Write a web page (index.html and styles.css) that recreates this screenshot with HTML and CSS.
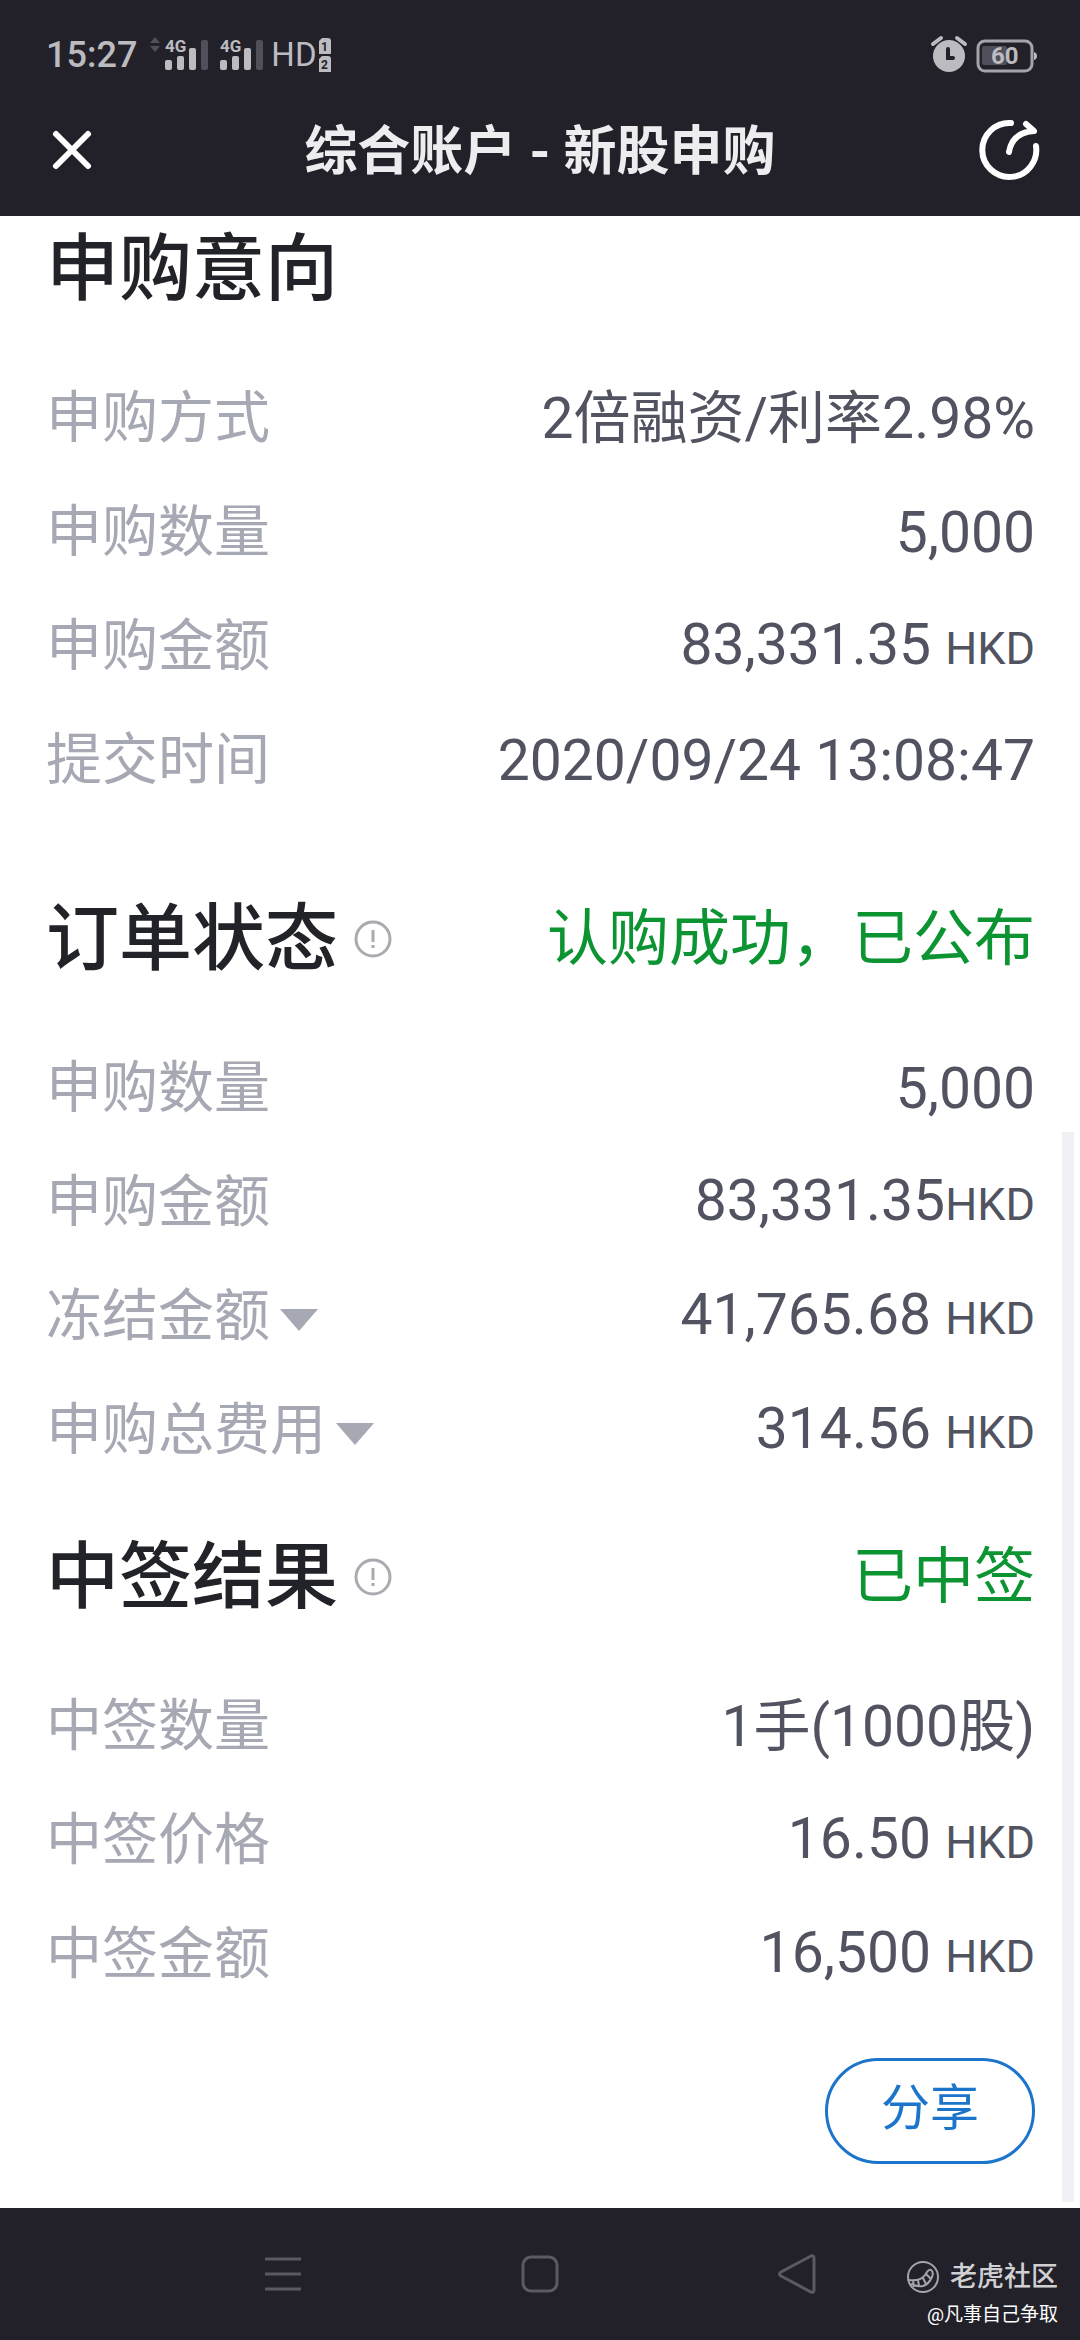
FILE: index.html
```
<!DOCTYPE html>
<html lang="zh-CN">
<head>
    <meta charset="UTF-8">
    <meta name="viewport" content="width=device-width, initial-scale=1.0">
    <title>综合账户 - 新股申购</title>
    <link rel="stylesheet" href="styles.css">
</head>
<body>
    <!-- 状态栏 -->
    <div class="status-bar">
        <span class="time">15:27</span>
        <svg class="signal-icons" width="120" height="40" viewBox="0 0 120 40">
            <path class="dim" d="M5 9l5-6 5 6zM5 12l5 6 5-6z"/>
            <text x="20" y="18" class="net">4G</text>
            <rect x="20" y="26" width="7" height="10" rx="2"/>
            <rect x="32" y="22" width="7" height="14" rx="2"/>
            <rect x="44" y="14" width="7" height="22" rx="2"/>
            <rect class="dim" x="56" y="6" width="7" height="30" rx="2"/>
            <text x="75" y="18" class="net">4G</text>
            <rect x="75" y="26" width="7" height="10" rx="2"/>
            <rect x="87" y="22" width="7" height="14" rx="2"/>
            <rect x="99" y="14" width="7" height="22" rx="2"/>
            <rect class="dim" x="111" y="6" width="7" height="30" rx="2"/>
        </svg>
        <span class="hd">HD</span>
        <svg class="sim-icons" width="14" height="40" viewBox="0 0 14 40">
            <path d="M4 4h6q3 0 3 3v13H1V7z"/>
            <path d="M4 22h6q3 0 3 3v13H1V25z"/>
            <text x="3" y="17" class="sim">1</text>
            <text x="3" y="35" class="sim">2</text>
        </svg>
        <svg class="power-icons" width="108" height="40" viewBox="0 0 108 40">
            <circle cx="19" cy="22" r="16"/>
            <path class="bells" d="M3 10l8-6M27 4l8 6"/>
            <path class="hands" d="M18 15v9h5"/>
            <rect class="charge" x="52" y="12" width="25" height="19" rx="2"/>
            <rect class="battery" x="48" y="7" width="54" height="30" rx="7"/>
            <path d="M104 18q3 1 3 4t-3 4z"/>
            <text x="61" y="30" class="level">60</text>
        </svg>
    </div>

    <header>
        <button type="button" class="icon-btn" aria-label="关闭">
            <svg width="44" height="44" viewBox="0 0 44 44">
                <path d="M6 6l32 32M38 6L6 38"/>
            </svg>
        </button>
        <h1>综合账户 - 新股申购</h1>
        <button type="button" class="icon-btn share-icon" aria-label="分享页面">
            <svg width="62" height="62" viewBox="0 0 62 62">
                <path d="M33 4A27 27 0 1 0 58 27"/>
                <path d="M31 33C33 20 42 13 56 12L48 5"/>
            </svg>
        </button>
    </header>

    <main>
        <section class="intent">
            <div class="section-head">
                <h2>申购意向</h2>
            </div>
            <dl>
                <div class="row"><dt>申购方式</dt><dd>2倍融资/利率2.98%</dd></div>
                <div class="row"><dt>申购数量</dt><dd>5,000</dd></div>
                <div class="row"><dt>申购金额</dt><dd>83,331.35 <small>HKD</small></dd></div>
                <div class="row"><dt>提交时间</dt><dd>2020/09/24 13:08:47</dd></div>
            </dl>
        </section>

        <section>
            <div class="section-head">
                <h2>订单状态</h2>
                <button type="button" class="info-btn" aria-label="订单状态说明">
                    <svg width="38" height="38" viewBox="0 0 38 38">
                        <circle cx="19" cy="19" r="17"/>
                        <path d="M19 10v12M19 25v3"/>
                    </svg>
                </button>
                <span class="state">认购成功，已公布</span>
            </div>
            <dl>
                <div class="row"><dt>申购数量</dt><dd>5,000</dd></div>
                <div class="row"><dt>申购金额</dt><dd>83,331.35<small>HKD</small></dd></div>
                <div class="row">
                    <dt>冻结金额<button type="button" class="arrow" aria-label="展开冻结金额"></button></dt>
                    <dd>41,765.68 <small>HKD</small></dd>
                </div>
                <div class="row">
                    <dt>申购总费用<button type="button" class="arrow" aria-label="展开申购总费用"></button></dt>
                    <dd>314.56 <small>HKD</small></dd>
                </div>
            </dl>
        </section>

        <section>
            <div class="section-head">
                <h2>中签结果</h2>
                <button type="button" class="info-btn" aria-label="中签结果说明">
                    <svg width="38" height="38" viewBox="0 0 38 38">
                        <circle cx="19" cy="19" r="17"/>
                        <path d="M19 10v12M19 25v3"/>
                    </svg>
                </button>
                <span class="state">已中签</span>
            </div>
            <dl>
                <div class="row"><dt>中签数量</dt><dd>1手(1000股)</dd></div>
                <div class="row"><dt>中签价格</dt><dd>16.50 <small>HKD</small></dd></div>
                <div class="row"><dt>中签金额</dt><dd>16,500 <small>HKD</small></dd></div>
            </dl>
        </section>

        <button type="button" class="share-btn">分享</button>
        <div class="scroll-thumb"></div>
    </main>

    <!-- 系统导航栏 -->
    <nav>
        <button type="button" aria-label="菜单">
            <svg width="40" height="40" viewBox="0 0 40 40"><path d="M2 5h36M2 20h36M2 35h36"/></svg>
        </button>
        <button type="button" aria-label="主页">
            <svg width="40" height="40" viewBox="0 0 40 40"><rect x="3" y="3" width="34" height="34" rx="8"/></svg>
        </button>
        <button type="button" aria-label="返回">
            <svg width="40" height="40" viewBox="0 0 40 40"><path d="M34 2L4 18q-3 2 0 4l30 16q3 1 3-2V4q0-3-3-2z"/></svg>
        </button>
        <div class="watermark">
            <div class="brand">
                <svg width="32" height="32" viewBox="0 0 32 32">
                    <circle cx="16" cy="16" r="15"/>
                    <path d="M2 19q9 1 13-2 3-2 5-6 2-3 4-2 3 2 1 7-3 7-9 9-6 1-12-2M6 19l1 7M11 19l1 6M16 17l3 6M19 13l5 5"/>
                </svg>
                <span>老虎社区</span>
            </div>
            <p>@凡事自己争取</p>
        </div>
    </nav>
</body>
</html>
```
FILE: styles.css
```
* {
    box-sizing: border-box;
    margin: 0;
    padding: 0;
}

body {
    display: flex;
    flex-direction: column;
    min-height: 100vh;
    font-family: Roboto, "Noto Sans CJK SC", sans-serif;
    background-color: #fff;
    color: #212328;
}

button {
    border: none;
    background: none;
    font-family: inherit;
    cursor: pointer;
}

svg {
    display: block;
}

/* 状态栏 */
.status-bar {
    display: flex;
    align-items: center;
    height: 108px;
    padding: 0 42px 0 46px;
    background-color: #22212a;
    color: #bcbbc0;
    font-size: 36px;
}

.status-bar svg {
    fill: #bcbbc0;
}

.time {
    padding-top: 2px;
    font-weight: 500;
}

.signal-icons {
    margin-left: 8px;
}

.status-bar .dim {
    fill: #504f5a;
}

.net {
    font-size: 17px;
    font-weight: 700;
}

.hd {
    margin-left: 6px;
    font-size: 33px;
}

.sim-icons {
    margin-left: 1px;
}

.status-bar .sim {
    font-size: 12px;
    font-weight: 700;
    fill: #22212a;
}

.power-icons {
    margin-left: auto;
}

.power-icons .bells {
    fill: none;
    stroke: #bcbbc0;
    stroke-width: 4;
    stroke-linecap: round;
}

.power-icons .hands {
    fill: none;
    stroke: #22212a;
    stroke-width: 4;
    stroke-linecap: round;
}

.power-icons .battery {
    fill: none;
    stroke: #a5a4aa;
    stroke-width: 3;
}

.power-icons .charge {
    fill: #504f5a;
}

.level {
    font-size: 24px;
    font-weight: 700;
}

/* 标题栏 */
header {
    display: grid;
    grid-template-columns: 1fr auto 1fr;
    align-items: center;
    height: 108px;
    padding: 0 40px 24px;
    background-color: #22212a;
}

h1 {
    padding-top: 4px;
    font-size: 53px;
    line-height: 80px;
    font-weight: 700;
    color: #ededef;
}

.icon-btn {
    justify-self: start;
    padding-left: 10px;
}

.share-icon {
    justify-self: end;
}

.icon-btn svg {
    fill: none;
    stroke: #fff;
    stroke-width: 6;
    stroke-linecap: round;
    stroke-linejoin: round;
}

/* 内容 */
main {
    position: relative;
    flex: 1;
    padding: 3px 45px 44px 46px;
}

section {
    margin-bottom: 40px;
}

.intent {
    margin-bottom: 72px;
}

.section-head {
    display: flex;
    align-items: center;
    height: 100px;
    margin-bottom: 42px;
}

h2 {
    font-size: 73px;
    line-height: 100px;
    font-weight: 500;
}

.info-btn {
    margin-left: 16px;
}

.info-btn svg {
    fill: none;
    stroke: #aaabb0;
    stroke-width: 3;
}

.state {
    margin-left: auto;
    font-size: 61px;
    line-height: 100px;
    color: #0b9431;
}

.row {
    display: flex;
    align-items: center;
    justify-content: space-between;
    height: 114px;
    line-height: 84px;
}

dt {
    display: flex;
    align-items: center;
    font-size: 56px;
    color: #a6a8b3;
}

dd {
    padding-top: 2px;
    font-size: 57px;
    color: #515360;
}

small {
    font-size: 45px;
}

.arrow {
    margin-top: 8px;
    margin-left: 10px;
    border-top: 22px solid #a6a8b3;
    border-left: 19px solid transparent;
    border-right: 19px solid transparent;
}

.share-btn {
    display: block;
    width: 210px;
    height: 106px;
    margin-top: 47px;
    margin-left: auto;
    padding-bottom: 16px;
    border: 3px solid #1c75ca;
    border-radius: 53px;
    font-size: 49px;
    color: #1c75ca;
}

.scroll-thumb {
    position: absolute;
    top: 46%;
    right: 6px;
    bottom: 6px;
    width: 12px;
    background-color: #f0f1f5;
}

/* 系统导航栏 */
nav {
    position: relative;
    display: flex;
    align-items: center;
    justify-content: center;
    gap: 217px;
    height: 132px;
    background-color: #22212a;
}

nav button svg {
    fill: none;
    stroke: #5b5a64;
    stroke-width: 3;
}

.watermark {
    position: absolute;
    right: 22px;
    bottom: 11px;
    text-align: right;
    color: #fff;
}

.brand {
    display: flex;
    align-items: center;
    justify-content: flex-end;
    gap: 11px;
    margin-bottom: 4px;
    font-size: 27px;
    line-height: 40px;
    font-weight: 500;
    color: #d0d0d3;
}

.brand svg {
    fill: none;
    stroke: #a5a4aa;
    stroke-width: 2;
}

.watermark p {
    font-size: 19px;
    line-height: 28px;
}
```
